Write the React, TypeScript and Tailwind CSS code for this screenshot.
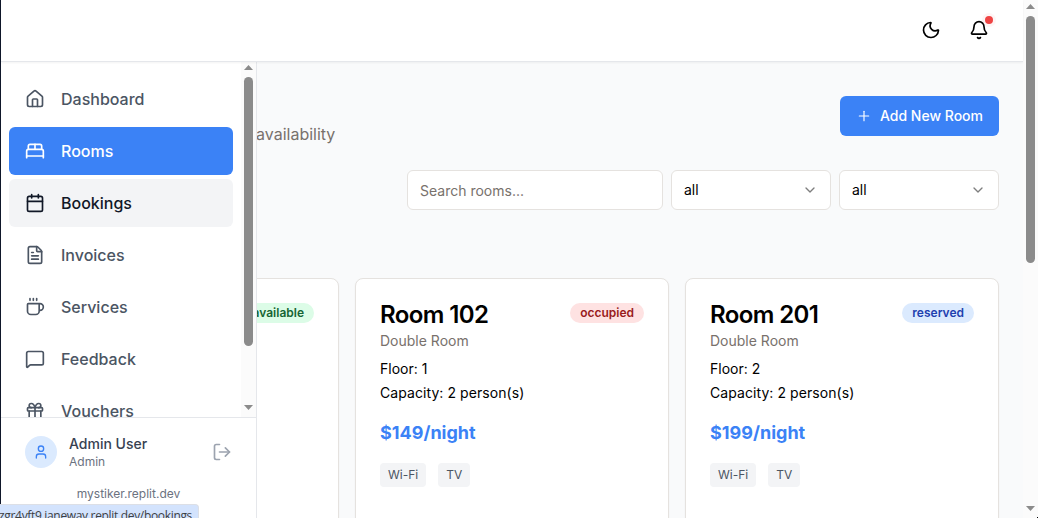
import React from "react";
import {
  Bell,
  BedDouble,
  Calendar,
  ChevronDown,
  Coffee,
  FileText,
  Gift,
  House,
  LogOut,
  MessageSquare,
  Moon,
  Plus,
  User,
  type LucideIcon,
} from "lucide-react";

type NavItem = { label: string; icon: LucideIcon; state?: "active" | "hover" };

const NAV: NavItem[] = [
  { label: "Dashboard", icon: House },
  { label: "Rooms", icon: BedDouble, state: "active" },
  { label: "Bookings", icon: Calendar, state: "hover" },
  { label: "Invoices", icon: FileText },
  { label: "Services", icon: Coffee },
  { label: "Feedback", icon: MessageSquare },
  { label: "Vouchers", icon: Gift },
];

const NAV_STYLES = {
  active: "bg-[#3b82f6] text-white",
  hover: "bg-[#f3f4f6] text-[#111827]",
  idle: "text-[#4b5563]",
};

const ROOMS = [
  { name: "Room 102", type: "Double Room", floor: 1, capacity: 2, price: 149, status: "occupied", badge: "bg-[#fee2e2] text-[#991b1b]" },
  { name: "Room 201", type: "Double Room", floor: 2, capacity: 2, price: 199, status: "reserved", badge: "bg-[#dbeafe] text-[#1e40af]" },
];

function Arrow({ down = false }: { down?: boolean }) {
  return (
    <svg width="9" height="5" viewBox="0 0 9 5" className="shrink-0">
      <path d={down ? "M0 0H9L4.5 5Z" : "M0 5H9L4.5 0Z"} fill="#8b8b8b" />
    </svg>
  );
}

function Scrollbar({ thumb, className }: { thumb: string; className: string }) {
  return (
    <div className={"flex w-[15px] shrink-0 flex-col items-center bg-[#fbfbfb] " + className}>
      <Arrow />
      <div className={"w-[9px] rounded-full bg-[#8b8b8b] " + thumb} />
      <div className="flex-1" />
      <Arrow down />
    </div>
  );
}

function Header() {
  return (
    <header className="relative z-20 flex h-[62px] shrink-0 items-center justify-end gap-[28px] border-b border-[#e5e7eb] bg-white pr-[34px] pb-[2px] text-black shadow-[0_1px_2px_0_rgba(0,0,0,0.05)]">
      <Moon size={20} strokeWidth={2} />
      <div className="relative">
        <Bell size={20} strokeWidth={2} />
        <span className="absolute -top-[4px] right-[-4px] size-2 rounded-full bg-[#ef4444] ring-[3px] ring-[#ef4444]/5" />
      </div>
    </header>
  );
}

function Sidebar() {
  return (
    <aside className="flex w-[256px] shrink-0 flex-col border-r border-[#e5e7eb] bg-white">
      <div className="flex h-[355px] shrink-0 overflow-hidden">
        <nav className="flex flex-1 flex-col gap-1 px-2 pt-[13px]">
          {NAV.map(({ label, icon: Icon, state }) => (
            <a
              key={label}
              className={"flex h-12 shrink-0 items-center gap-4 rounded-md px-4 text-base font-medium " + NAV_STYLES[state ?? "idle"]}
            >
              <Icon size={20} />
              <span>{label}</span>
            </a>
          ))}
        </nav>
        <Scrollbar className="pt-[3px] pb-[7px]" thumb="mt-[7px] h-[269px]" />
      </div>
      <div className="flex-1 border-t border-[#e5e7eb] px-6 pt-4">
        <div className="flex items-center">
          <div className="flex size-8 items-center justify-center rounded-full bg-[#dbeafe] text-[#3b82f6]">
            <User size={16} />
          </div>
          <div className="ml-3 flex-1">
            <p className="text-sm leading-5 font-medium text-[#374151]">Admin User</p>
            <p className="text-xs leading-4 text-[#6b7280]">Admin</p>
          </div>
          <LogOut size={20} className="text-[#9ca3af]" />
        </div>
        <p className="mt-4 text-center text-xs leading-4 text-[#6b7280]">mystiker.replit.dev</p>
      </div>
    </aside>
  );
}

function FilterSelect() {
  return (
    <div className="flex h-10 w-40 shrink-0 items-center justify-between rounded-md border border-[#e5e2df] bg-white px-3 text-sm text-black">
      <span>all</span>
      <ChevronDown size={16} className="opacity-50" />
    </div>
  );
}

function Badge({ label, className }: { label: string; className: string }) {
  return (
    <span className={"flex h-5 items-center rounded-full px-2.5 text-xs font-semibold " + className}>{label}</span>
  );
}

function RoomCard({ room }: { room: (typeof ROOMS)[number] }) {
  return (
    <article className="w-[314px] shrink-0 rounded-lg border border-[#e5e2df] bg-white p-6 text-black shadow-[0_1px_2px_0_rgba(0,0,0,0.05)]">
      <div className="flex items-start justify-between">
        <h3 className="text-2xl leading-6 font-semibold tracking-tight">{room.name}</h3>
        <Badge label={room.status} className={room.badge} />
      </div>
      <p className="mt-1 text-sm leading-5 text-[#78716c]">{room.type}</p>
      <p className="mt-2 text-sm leading-5">Floor: {room.floor}</p>
      <p className="mt-1 text-sm leading-5 tracking-[0.07px]">Capacity: {room.capacity} person(s)</p>
      <p className="mt-4 text-lg leading-7 font-bold text-[#3b82f6]">${room.price}/night</p>
      <div className="mt-4 flex gap-3 text-xs text-[#4b5563]">
        <span className="flex h-6 items-center rounded bg-[#f3f4f6] px-2">Wi-Fi</span>
        <span className="flex h-6 items-center rounded bg-[#f3f4f6] px-2">TV</span>
      </div>
    </article>
  );
}

function RoomsPage() {
  return (
    <main className="flex min-w-0 flex-1 flex-col overflow-hidden bg-[#f9fafb] pr-6">
      <div className="mt-[34px] flex h-[50px] shrink-0 items-start justify-between">
        <p className="-ml-px self-end text-base leading-6 text-[#78716c]">availability</p>
        <button className="flex h-10 items-center gap-2 rounded-md bg-[#3b82f6] px-4 text-sm font-medium text-white">
          <Plus size={16} strokeWidth={1.75} />
          Add New Room
        </button>
      </div>
      <div className="mt-6 flex shrink-0 justify-end gap-2">
        <div className="flex h-10 w-64 items-center rounded-md border border-[#e5e2df] bg-white px-3 pt-px text-sm text-[#78716c]">
          Search rooms...
        </div>
        <FilterSelect />
        <FilterSelect />
      </div>
      <div className="mt-[68px] flex h-[320px] shrink-0 justify-end gap-4">
        <article className="flex w-[314px] shrink-0 items-start justify-end rounded-lg border border-[#e5e2df] bg-white p-6 shadow-[0_1px_2px_0_rgba(0,0,0,0.05)]">
          <Badge label="available" className="bg-[#dcfce7] text-[#166534]" />
        </article>
        {ROOMS.map((room) => (
          <RoomCard key={room.name} room={room} />
        ))}
      </div>
    </main>
  );
}

export default function App() {
  return (
    <div className="relative flex h-[518px] w-[1038px] overflow-hidden bg-white font-['Inter',sans-serif]">
      <div className="w-px shrink-0 bg-[#0f172a]" />
      <div className="flex min-w-0 flex-1 flex-col">
        <Header />
        <div className="flex min-h-0 flex-1">
          <Sidebar />
          <RoomsPage />
        </div>
      </div>
      <Scrollbar className="pt-1 pb-[7px]" thumb="mt-[7px] h-[247px]" />
      <div className="absolute top-[504px] left-0 z-30 h-[22px] w-[199px] overflow-hidden rounded-tr border-t border-r border-[#dcdfe6] bg-[#d3e3fd]">
        <p className="absolute top-[3px] right-[6px] font-['Open_Sans',sans-serif] text-xs leading-4 tracking-[-0.33px] whitespace-nowrap text-[#3c4043]">
          zgr4vft9.janeway.replit.dev/bookings
        </p>
      </div>
      <span className="absolute right-0 bottom-0 size-px bg-black" />
    </div>
  );
}
